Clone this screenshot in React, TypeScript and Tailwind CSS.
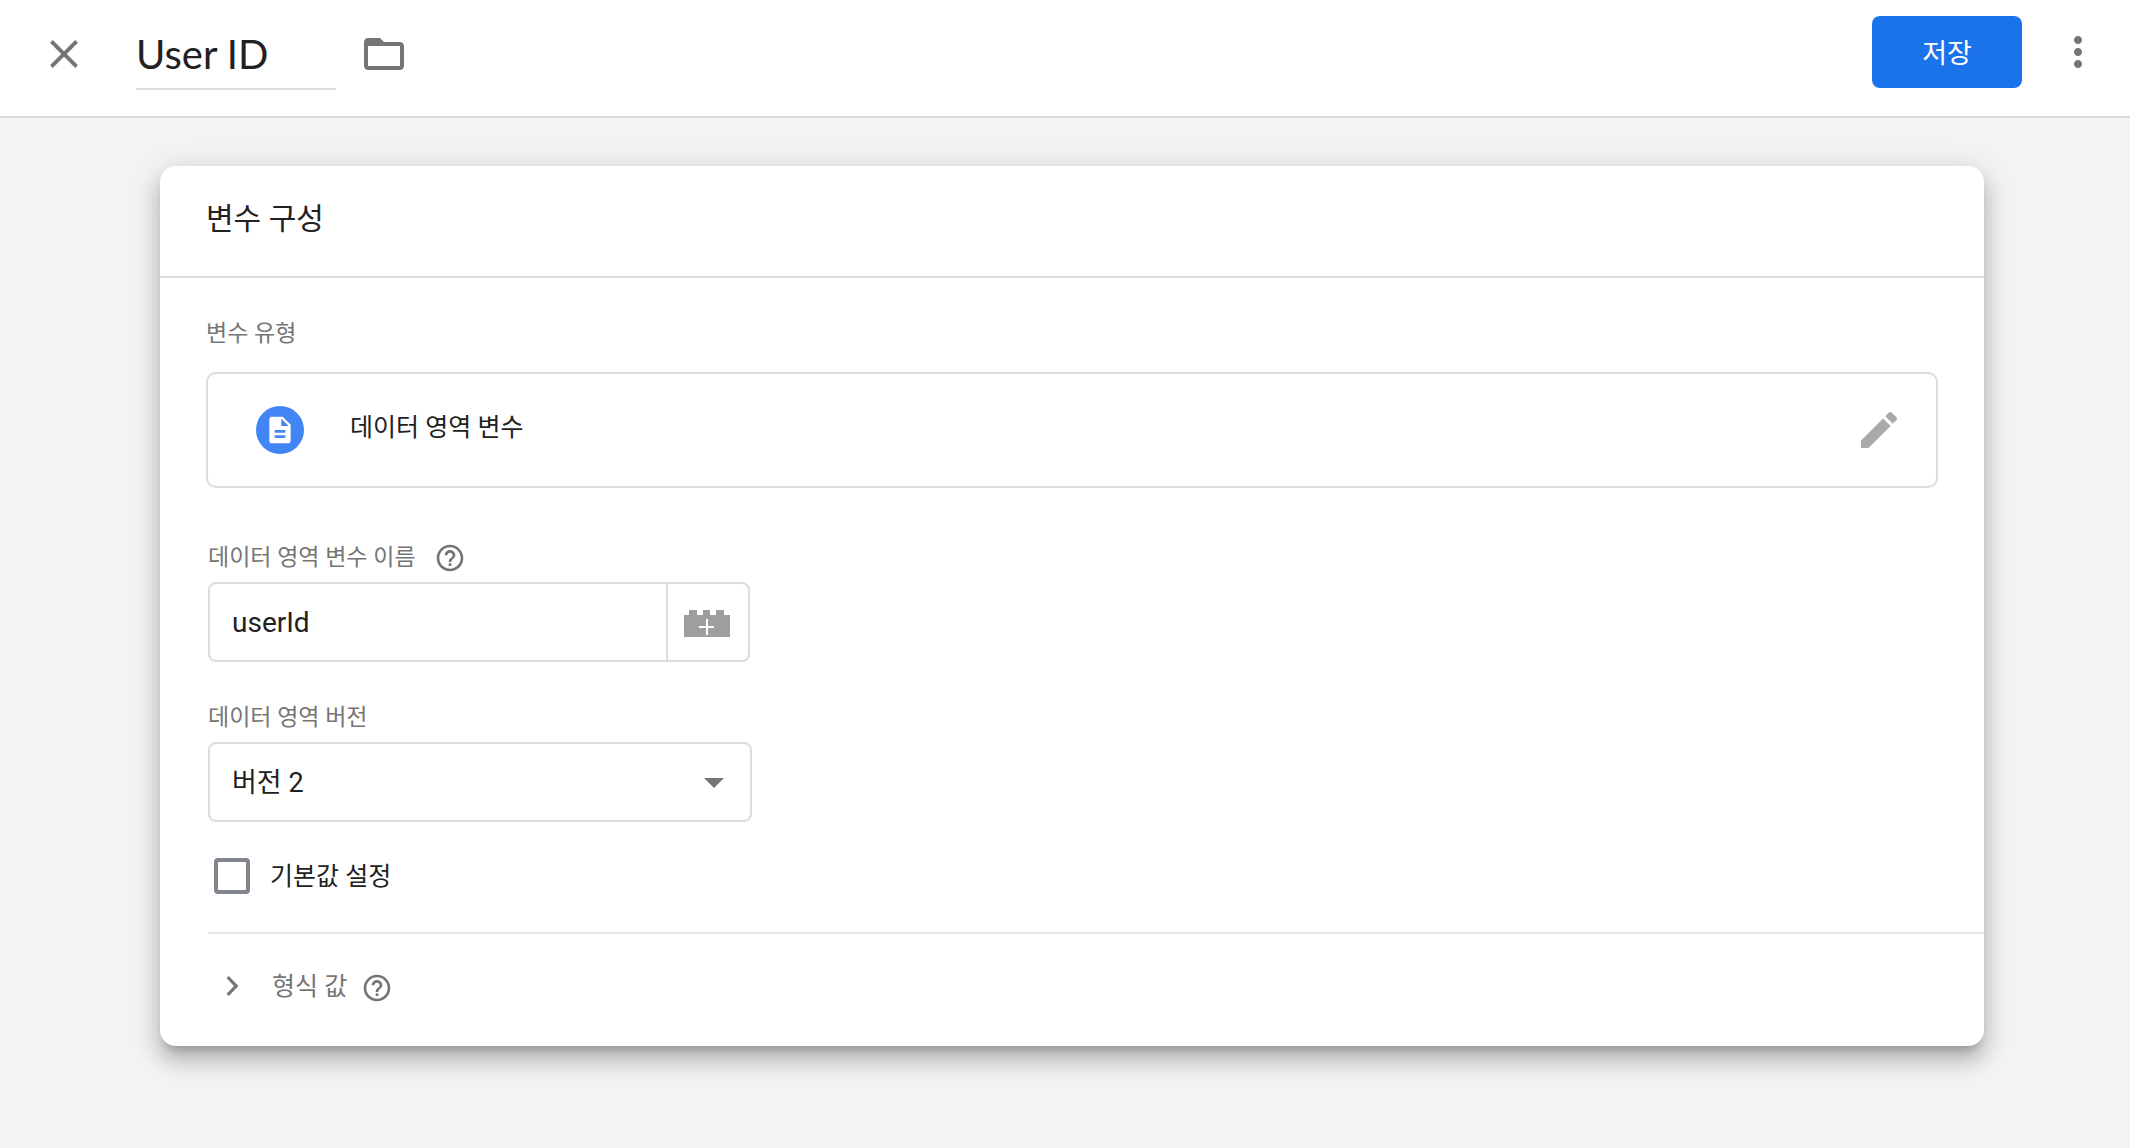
import { useState, type ReactNode } from 'react'

// ── Icons ─────────────────────────────────────────────────────────────────────
function Icon({ className, children }: { className: string; children: ReactNode }) {
  return (
    <svg viewBox="0 0 24 24" fill="currentColor" aria-hidden="true" className={`shrink-0 ${className}`}>
      {children}
    </svg>
  )
}

function HelpButton({ label }: { label: string }) {
  return (
    <button type="button" aria-label={label} className="text-[#757575]">
      <Icon className="size-8">
        <path d="M11 18h2v-2h-2v2zm1-16C6.48 2 2 6.48 2 12s4.48 10 10 10 10-4.48 10-10S17.52 2 12 2zm0 18c-4.41 0-8-3.59-8-8s3.59-8 8-8 8 3.59 8 8-3.59 8-8 8zm0-14c-2.21 0-4 1.79-4 4h2c0-1.1.9-2 2-2s2 .9 2 2c0 2-3 1.75-3 5h2c0-2.25 3-2.5 3-5 0-2.21-1.79-4-4-4z" />
      </Icon>
    </button>
  )
}

function BrickIcon() {
  return (
    <svg viewBox="0 0 46 27" aria-hidden="true" className="h-[27px] w-[46px]">
      <path fill="#9e9e9e" d="M0 5h5V0h8v5h6V0h7v5h6V0h8v5h6v22H0z" />
      <path stroke="#fff" strokeWidth="2" d="M23 9v16M15 17h15" />
    </svg>
  )
}

// ── Top bar ───────────────────────────────────────────────────────────────────
function TopBar() {
  const [name, setName] = useState('User ID')

  return (
    <header className="flex h-[118px] items-start border-b-2 border-[#dadce0] bg-white pr-7 pl-10">
      <button type="button" aria-label="닫기" className="mt-[30px] text-[#757575]">
        <Icon className="size-12">
          <path d="M19 6.41 17.59 5 12 10.59 6.41 5 5 6.41 10.59 12 5 17.59 6.41 19 12 13.41 17.59 19 19 17.59 13.41 12z" />
        </Icon>
      </button>
      <input
        type="text"
        aria-label="변수 이름"
        value={name}
        onChange={(e) => setName(e.target.value)}
        className="mt-4 ml-12 h-[74px] w-[200px] border-b-2 border-[#dadce0] pt-1 font-['Lato','Noto_Sans_CJK_KR',sans-serif] text-[40px] text-[#212121] outline-none"
      />
      <button type="button" aria-label="폴더" className="mt-[30px] ml-6 text-[#757575]">
        <Icon className="size-12">
          <path d="M20 6h-8l-2-2H4c-1.1 0-1.99.9-1.99 2L2 18c0 1.1.9 2 2 2h16c1.1 0 2-.9 2-2V8c0-1.1-.9-2-2-2zm0 12H4V8h16v10z" />
        </Icon>
      </button>
      <button type="button" className="mt-4 ml-auto h-[72px] w-[150px] rounded-lg bg-[#1a73e8] pt-1 text-[27px] text-white">
        저장
      </button>
      <button type="button" aria-label="더보기" className="mt-7 ml-8 text-[#757575]">
        <Icon className="size-12">
          <path d="M12 8c1.1 0 2-.9 2-2s-.9-2-2-2-2 .9-2 2 .9 2 2 2zm0 2c-1.1 0-2 .9-2 2s.9 2 2 2 2-.9 2-2-.9-2-2-2zm0 6c-1.1 0-2 .9-2 2s.9 2 2 2 2-.9 2-2-.9-2-2-2z" />
        </Icon>
      </button>
    </header>
  )
}

// ── Variable type row ─────────────────────────────────────────────────────────
function VariableType() {
  return (
    <section className="px-[46px]">
      <h3 className="text-[23px] leading-8 text-[#757575]">변수 유형</h3>
      <div className="mt-[22px] flex h-[116px] items-center rounded-[10px] border-2 border-[#dadce0] pr-[33px] pl-12">
        <span className="flex size-12 items-center justify-center rounded-full bg-[#4285f4] text-white">
          <Icon className="size-8">
            <path d="M14 2H6c-1.1 0-1.99.9-1.99 2L4 20c0 1.1.89 2 1.99 2H18c1.1 0 2-.9 2-2V8l-6-6zm2 16H8v-2h8v2zm0-4H8v-2h8v2zm-3-5V3.5L18.5 9H13z" />
          </Icon>
        </span>
        <span className="ml-[46px] pb-1 text-[25px] text-[#212121]">데이터 영역 변수</span>
        <button type="button" aria-label="수정" className="ml-auto text-[#aaaaaa]">
          <Icon className="size-12">
            <path d="M3 17.25V21h3.75L17.81 9.94l-3.75-3.75L3 17.25zM20.71 7.04c.39-.39.39-1.02 0-1.41l-2.34-2.34c-.39-.39-1.02-.39-1.41 0l-1.83 1.83 3.75 3.75 1.83-1.83z" />
          </Icon>
        </button>
      </div>
    </section>
  )
}

// ── Data layer fields ─────────────────────────────────────────────────────────
function DataLayerFields() {
  const [key, setKey] = useState('userId')
  const [version, setVersion] = useState('2')
  const [useDefault, setUseDefault] = useState(false)

  return (
    <section className="mt-[54px] pl-12">
      <div className="flex h-8 items-center gap-[18px]">
        <label htmlFor="key" className="text-[23px] leading-8 text-[#757575]">
          데이터 영역 변수 이름
        </label>
        <HelpButton label="변수 이름 도움말" />
      </div>
      <div className="mt-2 flex h-20 w-[542px] rounded-lg border-2 border-[#dadce0]">
        <input
          id="key"
          type="text"
          value={key}
          onChange={(e) => setKey(e.target.value)}
          className="min-w-0 flex-1 px-[22px] pt-0.5 text-[28px] text-[#212121] outline-none"
        />
        <button type="button" aria-label="변수 삽입" className="flex w-[82px] items-center justify-center border-l-2 border-[#dadce0] pt-0.5 pr-0.5">
          <BrickIcon />
        </button>
      </div>

      <label htmlFor="version" className="mt-10 block text-[23px] leading-8 text-[#757575]">
        데이터 영역 버전
      </label>
      <div className="relative mt-2 w-[544px]">
        <select
          id="version"
          value={version}
          onChange={(e) => setVersion(e.target.value)}
          className="h-20 w-full appearance-none rounded-lg border-2 border-[#dadce0] bg-white px-[22px] pt-0.5 text-[27px] text-[#212121] outline-none"
        >
          <option value="1">버전 1</option>
          <option value="2">버전 2</option>
        </select>
        <Icon className="pointer-events-none absolute top-4 right-3.5 size-12 text-[#757575]">
          <path d="M7 10l5 5 5-5z" />
        </Icon>
      </div>

      <div className="mt-9 flex h-9 items-center gap-5 pl-1.5">
        <input
          id="default"
          type="checkbox"
          checked={useDefault}
          onChange={(e) => setUseDefault(e.target.checked)}
          className="size-9 appearance-none rounded-sm border-4 border-[#80868b] checked:bg-[#1a73e8]"
        />
        <label htmlFor="default" className="pt-0.5 text-[25px] leading-9 text-[#212121]">
          기본값 설정
        </label>
      </div>
    </section>
  )
}

// ── Format value ──────────────────────────────────────────────────────────────
function FormatValue() {
  return (
    <section className="mt-[38px] ml-12 flex h-[114px] items-center border-t-2 border-[#e8e8e8] pb-2">
      <button type="button" aria-expanded="false" className="flex items-center text-[#757575]">
        <Icon className="size-12">
          <path d="M10.4 7 9.3 8.1 13 12l-3.7 3.9 1.1 1.1 4.8-5z" />
        </Icon>
        <span className="ml-4 pt-0.5 text-[25px]">형식 값</span>
      </button>
      <div className="ml-3.5 flex pt-1">
        <HelpButton label="형식 값 도움말" />
      </div>
    </section>
  )
}

export default function App() {
  return (
    <div className="min-h-screen bg-[#f1f3f4] font-['Roboto','Noto_Sans_CJK_KR',sans-serif]">
      <TopBar />
      <main className="mt-12 mr-[146px] ml-40 rounded-2xl bg-white shadow-[0_10px_10px_-6px_rgba(0,0,0,0.2),0_16px_20px_2px_rgba(0,0,0,0.14),0_6px_28px_4px_rgba(0,0,0,0.12)]">
        <h2 className="flex h-28 items-center border-b-2 border-[#dadce0] px-[46px] pb-1.5 text-[30px] text-[#212121]">
          변수 구성
        </h2>
        <div className="pt-10">
          <VariableType />
          <DataLayerFields />
          <FormatValue />
        </div>
      </main>
    </div>
  )
}
